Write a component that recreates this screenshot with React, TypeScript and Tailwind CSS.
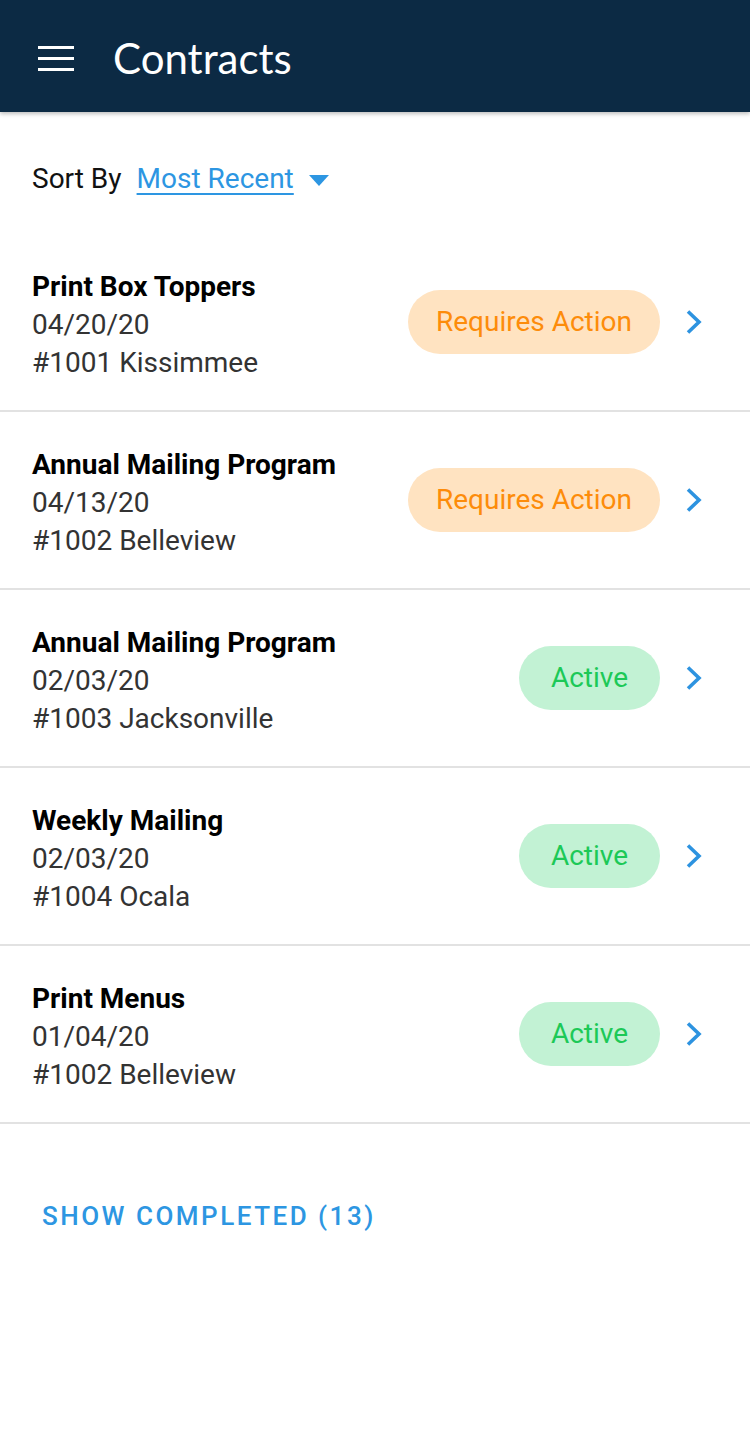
import React from 'react';

type Status = 'action' | 'active';

interface Contract {
  title: string;
  date: string;
  location: string;
  status: Status;
}

const contracts: Contract[] = [
  { title: 'Print Box Toppers', date: '04/20/20', location: '#1001 Kissimmee', status: 'action' },
  { title: 'Annual Mailing Program', date: '04/13/20', location: '#1002 Belleview', status: 'action' },
  { title: 'Annual Mailing Program', date: '02/03/20', location: '#1003 Jacksonville', status: 'active' },
  { title: 'Weekly Mailing', date: '02/03/20', location: '#1004 Ocala', status: 'active' },
  { title: 'Print Menus', date: '01/04/20', location: '#1002 Belleview', status: 'active' },
];

function StatusBadge({ status }: { status: Status }) {
  if (status === 'action') {
    return (
      <span className="h-[64px] px-[28px] rounded-full bg-[#ffe3c1] text-[#fd8c0a] flex items-center text-[28px]">
        Requires Action
      </span>
    );
  }
  return (
    <span className="h-[64px] px-[32px] rounded-full bg-[#c2f2d4] text-[#1cc957] flex items-center text-[28px]">
      Active
    </span>
  );
}

function Chevron() {
  return (
    <svg width="20" height="26" viewBox="0 0 20 26" className="ml-[24px]">
      <path d="M4 2.5 L15 13 L4 23.5" fill="none" stroke="#2d93e0" strokeWidth="3.6" />
    </svg>
  );
}

export default function App() {
  return (
    <div className="min-h-[1440px] bg-white font-['Roboto',sans-serif]">
      <header className="h-[112px] bg-[#0c2a44] flex items-center shadow-[0_2px_4px_rgba(0,0,0,0.25)] relative">
        <button className="ml-[38px] mt-[4px] flex flex-col gap-[8px]">
          <span className="block w-[36px] h-[3px] bg-white" />
          <span className="block w-[36px] h-[3px] bg-white" />
          <span className="block w-[36px] h-[3px] bg-white" />
        </button>
        <h1 className="ml-[39px] mt-[4px] text-white text-[42px] font-['Lato',sans-serif] leading-none">Contracts</h1>
      </header>

      <div className="h-[122px] pt-[12px] pl-[32px] flex items-center text-[28px]">
        <span className="text-[#111]">Sort By</span>
        <span className="ml-[15px] text-[#2d96e2] underline underline-offset-[5px] decoration-[2px]">Most Recent</span>
        <svg width="20" height="11" viewBox="0 0 20 11" className="ml-[15px] mt-[2px]">
          <path d="M0 0 L20 0 L10 11 Z" fill="#2d96e2" />
        </svg>
      </div>

      <div>
        {contracts.map((c, i) => (
          <div key={i} className="h-[178px] border-b-2 border-[#e2e2e2] flex items-center pl-[32px] pr-[46px]">
            <div className="flex-1 leading-[38px] text-[28px] pt-[5px]">
              <div className="font-bold text-black">{c.title}</div>
              <div className="text-[#333]">{c.date}</div>
              <div className="text-[#333]">{c.location}</div>
            </div>
            <StatusBadge status={c.status} />
            <Chevron />
          </div>
        ))}
      </div>

      <div className="pl-[42px] pt-[73px]">
        <button className="text-[#2d96e2] text-[26px] font-medium tracking-[2.5px]">SHOW COMPLETED (13)</button>
      </div>
    </div>
  );
}
